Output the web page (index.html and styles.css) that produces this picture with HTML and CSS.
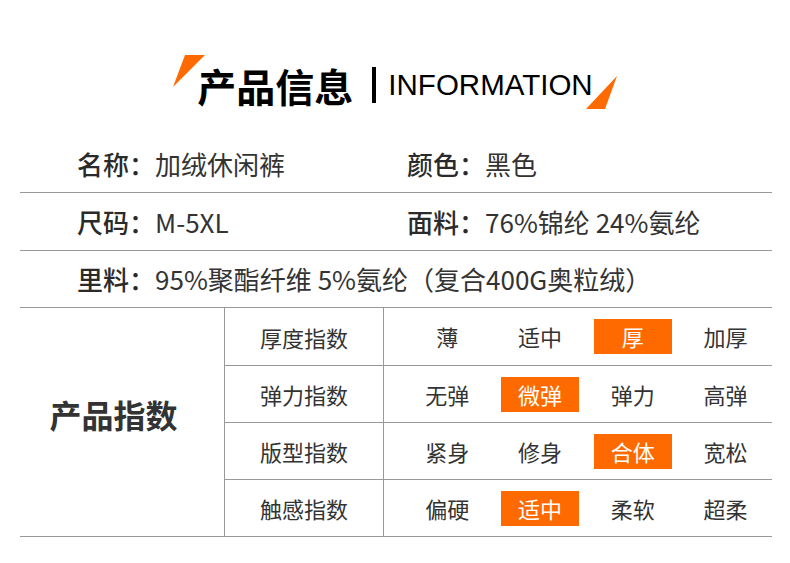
FILE: index.html
```html
<!DOCTYPE html>
<html lang="zh">
<head>
<meta charset="utf-8">
<link rel="stylesheet" href="styles.css">
</head>
<body>
<div class="page">
  <header class="header">
    <div class="title">
      <svg class="deco deco-left" width="34" height="34" viewBox="0 0 34 34"><polygon points="12,0 32,0 0,32" fill="#ff6a00"/></svg>
      <span class="title-cn">产品信息</span>
      <span class="title-bar"></span>
      <span class="title-en">INFORMATION</span>
      <svg class="deco deco-right" width="34" height="34" viewBox="0 0 34 34"><polygon points="32,0 20,33 1,33" fill="#ff6a00"/></svg>
    </div>
  </header>

  <section class="info">
    <div class="info-row">
      <div class="info-cell"><span class="label">名称：</span>加绒休闲裤</div>
      <div class="info-cell"><span class="label">颜色：</span>黑色</div>
    </div>
    <div class="info-row">
      <div class="info-cell"><span class="label">尺码：</span>M-5XL</div>
      <div class="info-cell"><span class="label">面料：</span>76%锦纶 24%氨纶</div>
    </div>
    <div class="info-row single">
      <div class="info-cell"><span class="label">里料：</span>95%聚酯纤维 5%氨纶（复合400G奥粒绒）</div>
    </div>
  </section>

  <section class="index">
    <div class="index-title">产品指数</div>
    <div class="index-rows">
      <div class="index-row">
        <div class="index-name">厚度指数</div>
        <div class="options">
          <div class="opt"><span>薄</span></div>
          <div class="opt"><span>适中</span></div>
          <div class="opt"><span class="on">厚</span></div>
          <div class="opt"><span>加厚</span></div>
        </div>
      </div>
      <div class="index-row">
        <div class="index-name">弹力指数</div>
        <div class="options">
          <div class="opt"><span>无弹</span></div>
          <div class="opt"><span class="on">微弹</span></div>
          <div class="opt"><span>弹力</span></div>
          <div class="opt"><span>高弹</span></div>
        </div>
      </div>
      <div class="index-row">
        <div class="index-name">版型指数</div>
        <div class="options">
          <div class="opt"><span>紧身</span></div>
          <div class="opt"><span>修身</span></div>
          <div class="opt"><span class="on">合体</span></div>
          <div class="opt"><span>宽松</span></div>
        </div>
      </div>
      <div class="index-row">
        <div class="index-name">触感指数</div>
        <div class="options">
          <div class="opt"><span>偏硬</span></div>
          <div class="opt"><span class="on">适中</span></div>
          <div class="opt"><span>柔软</span></div>
          <div class="opt"><span>超柔</span></div>
        </div>
      </div>
    </div>
  </section>
</div>
</body>
</html>
```

FILE: styles.css
```css
* { box-sizing: border-box; }
html, body { margin: 0; padding: 0; background: #fff; }
body {
  font-family: "Noto Sans CJK SC", "Noto Sans", sans-serif;
  color: #333;
  width: 790px;
  height: 563px;
  overflow: hidden;
}
.page { width: 790px; }

.header {
  height: 135px;
  display: flex;
  justify-content: center;
  padding-top: 66px;
  padding-left: 0;
}
.title {
  position: relative;
  display: flex;
  align-items: center;
  height: 38px;
}
.title-cn {
  font-size: 39px;
  line-height: 38px;
  font-weight: 700;
  color: #000;
  letter-spacing: 0;
}
.title-bar {
  width: 4px;
  height: 36px;
  background: #000;
  margin-left: 19px;
  margin-right: 12px;
}
.title-en {
  font-family: "Liberation Sans", Arial, sans-serif;
  font-size: 29.5px;
  line-height: 38px;
  color: #000;
  letter-spacing: 0;
}
.deco { position: absolute; }
.deco-left { left: -24px; top: -11px; }
.deco-right { right: -26px; top: 10px; }

.info { margin: 0 18px 0 20px; }
.info-row {
  display: grid;
  grid-template-columns: 330px 1fr;
  height: 58px;
  border-bottom: 1px solid #999;
  align-items: center;
  padding-left: 57px;
  font-size: 26px;
}
.info-row.single { grid-template-columns: 1fr; height: 57px; }
.info-cell { white-space: nowrap; line-height: 30px; }
.label { font-weight: 500; color: #2a2a2a; }

.index {
  margin: 0 18px 0 20px;
  display: grid;
  grid-template-columns: 205px 1fr;
  border-bottom: 1px solid #999;
}
.index-title {
  border-right: 1px solid #999;
  display: flex;
  align-items: center;
  justify-content: center;
  padding-right: 17px;
  padding-bottom: 16px;
  font-size: 32px;
  font-weight: 700;
  color: #333;
}
.index-row {
  display: grid;
  grid-template-columns: 159px 1fr;
  height: 57px;
  border-bottom: 1px solid #999;
}
.index-row:first-child { height: 58px; }
.index-row:last-child { border-bottom: none; height: 56px; }
.index-name {
  border-right: 1px solid #999;
  display: flex;
  align-items: center;
  justify-content: center;
  font-size: 22px;
  color: #333;
}
.options {
  display: grid;
  grid-template-columns: repeat(4, 1fr);
  padding-left: 17px;
  align-items: center;
}
.opt {
  display: flex;
  justify-content: center;
  font-size: 22px;
  color: #333;
}
.opt span {
  display: inline-block;
  width: 78px;
  height: 35px;
  line-height: 35px;
  text-align: center;
}
.opt span.on {
  background: #ff6a00;
  color: #fff;
}
```
